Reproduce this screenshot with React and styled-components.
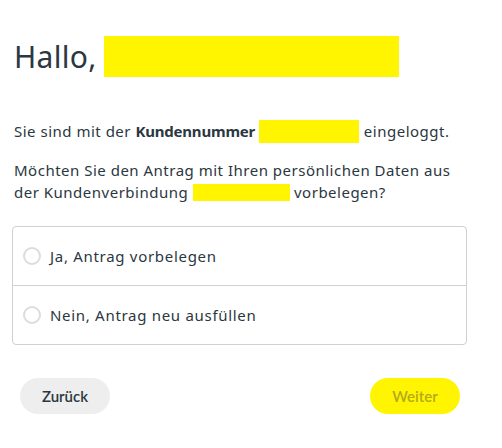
import styled, { createGlobalStyle } from "styled-components";

const GlobalStyle = createGlobalStyle`
  html, body {
    margin: 0;
    padding: 0;
    background: #ffffff;
  }
  body {
    font-family: "Noto Sans", "Liberation Sans", sans-serif;
    color: #2b3741;
  }
`;

const Page = styled.main`
  width: 502px;
  padding: 36px 35px 0 12px;
  box-sizing: border-box;
`;

const Heading = styled.h1`
  display: flex;
  align-items: center;
  gap: 7px;
  margin: 0 0 43px 2px;
  font-size: 30px;
  font-weight: 400;
  line-height: 41px;
  letter-spacing: 0.3px;
  color: #2b3741;
`;

const Masked = styled.span`
  display: inline-block;
  background: #fff500;
  width: ${(p) => p.$w}px;
  height: ${(p) => p.$h}px;
  vertical-align: ${(p) => p.$valign || "middle"};
`;

const Text = styled.p`
  margin: 0 0 ${(p) => p.$mb || 0}px 2px;
  font-size: 15px;
  line-height: 22px;
  letter-spacing: 0.5px;
  color: #2b3741;

  strong {
    letter-spacing: -0.2px;
  }
`;

const Card = styled.div`
  border: 1px solid #d0d0d0;
  border-radius: 4px;
  margin-top: 23px;
`;

const Option = styled.label`
  display: flex;
  align-items: center;
  gap: 9px;
  height: 58px;
  padding: 0 10px;
  font-size: 15px;
  letter-spacing: 0.7px;
  color: #2b3741;
  cursor: pointer;

  & + & {
    border-top: 1px solid #d0d0d0;
  }
`;

const Radio = styled.span`
  width: 18px;
  height: 18px;
  box-sizing: border-box;
  border: 2px solid #dcdcdc;
  border-radius: 50%;
  flex: none;
`;

const Actions = styled.div`
  display: flex;
  justify-content: space-between;
  padding: 33px 7px 0 8px;
`;

const Button = styled.button`
  width: 90px;
  height: 36px;
  border: none;
  border-radius: 18px;
  font-family: Lato, "Liberation Sans", sans-serif;
  font-size: 15px;
  font-weight: 600;
  background: ${(p) => (p.$primary ? "#fff500" : "#eeeeee")};
  color: ${(p) => (p.$primary ? "#b3aa1c" : "#2b3741")};
  cursor: pointer;
`;

export default function App() {
  return (
    <>
      <GlobalStyle />
      <Page>
        <Heading>
          Hallo, <Masked $w={295} $h={41} />
        </Heading>
        <Text $mb={16}>
          Sie sind mit der <strong>Kundennummer</strong>{" "}
          <Masked $w={100} $h={23} $valign="-6px" /> eingeloggt.
        </Text>
        <Text>
          Möchten Sie den Antrag mit Ihren persönlichen Daten aus der
          Kundenverbindung <Masked $w={97} $h={17} $valign="-3px" /> vorbelegen?
        </Text>
        <Card>
          <Option>
            <Radio />
            Ja, Antrag vorbelegen
          </Option>
          <Option>
            <Radio />
            Nein, Antrag neu ausfüllen
          </Option>
        </Card>
        <Actions>
          <Button>Zurück</Button>
          <Button $primary>Weiter</Button>
        </Actions>
      </Page>
    </>
  );
}
